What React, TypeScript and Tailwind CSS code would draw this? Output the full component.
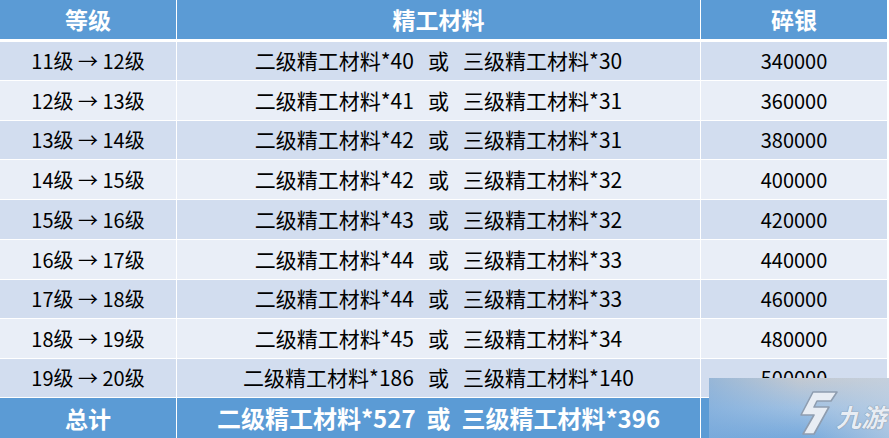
import React from "react";

const rows = [
  ["11级 → 12级", "40", "30", "340000"],
  ["12级 → 13级", "41", "31", "360000"],
  ["13级 → 14级", "42", "31", "380000"],
  ["14级 → 15级", "42", "32", "400000"],
  ["15级 → 16级", "43", "32", "420000"],
  ["16级 → 17级", "44", "33", "440000"],
  ["17级 → 18级", "44", "33", "460000"],
  ["18级 → 19级", "45", "34", "480000"],
  ["19级 → 20级", "186", "140", "500000"],
];

const heights = [
  "h-[38px]",
  "h-[39px]",
  "h-[38px]",
  "h-[39px]",
  "h-[39px]",
  "h-[39px]",
  "h-[38px]",
  "h-[39px]",
  "h-[38px]",
];

const font = { fontFamily: '"Noto Sans CJK SC", "Noto Sans", sans-serif' };

export default function App() {
  return (
    <div className="relative w-[889px] h-[438px] bg-white overflow-hidden" style={font}>
      <div className="flex flex-col w-[887px]">
        {/* header */}
        <div className="flex h-[39px] gap-[1px] text-white font-bold text-[23px]">
          <div className="w-[176px] bg-[#5b9bd5] flex items-center justify-center">等级</div>
          <div className="w-[523px] bg-[#5b9bd5] flex items-center justify-center">精工材料</div>
          <div className="w-[186px] bg-[#5b9bd5] flex items-center justify-center">碎银</div>
        </div>
        <div className="h-[3px]" />
        {rows.map((r, i) => {
          const bg = i % 2 === 0 ? "bg-[#d2ddef]" : "bg-[#e9eef7]";
          return (
            <div key={i} className="flex flex-col">
              <div className={`flex ${heights[i]} gap-[1px] text-[20px] text-black`}>
                <div className={`w-[176px] ${bg} flex items-center justify-center whitespace-pre`}>{r[0]}</div>
                <div className={`w-[523px] ${bg} flex items-center justify-center whitespace-pre text-[21px]`}>
                  {`二级精工材料*${r[1]}   或   三级精工材料*${r[2]}`}
                </div>
                <div className={`w-[186px] ${bg} flex items-center justify-center`}>{r[3]}</div>
              </div>
              <div className="h-[1px]" />
            </div>
          );
        })}
        {/* footer */}
        <div className="flex h-[40px] gap-[1px] text-white font-bold text-[23px]">
          <div className="w-[176px] bg-[#5b9bd5] flex items-center justify-center">总计</div>
          <div className="w-[523px] bg-[#5b9bd5] flex items-center justify-center whitespace-pre text-[24px]">
            {"二级精工材料*527  或  三级精工材料*396"}
          </div>
          <div className="w-[186px] bg-[#5b9bd5]" />
        </div>
      </div>

      {/* watermark */}
      <div className="absolute left-[709px] top-[378px] w-[180px] h-[60px] overflow-hidden bg-gradient-to-b from-[#c3c9d1] via-[#9fc0e2] to-[#76a9dc]">
        <div className="absolute inset-0 bg-gradient-to-r from-[#7aaadb]/60 via-transparent to-[#c6d4e4]/60" />
        <svg className="absolute left-[88px] top-[12px]" width="42" height="46" viewBox="0 0 42 46">
          <path
            d="M16 2 L40 2 L34 11 L20 11 L17 17 L32 17 L17 44 L6 44 L17 25 L4 25 Z"
            fill="#e8edf4"
            stroke="#8e9db0"
            strokeWidth="1.6"
            strokeLinejoin="round"
          />
        </svg>
        <div className="absolute left-[127px] top-[26px] text-[25px] leading-none font-bold italic text-[#e8edf4] [text-shadow:0_0_1px_#7f8fa1,0_0_1px_#7f8fa1]">
          九游
        </div>
      </div>
    </div>
  );
}
